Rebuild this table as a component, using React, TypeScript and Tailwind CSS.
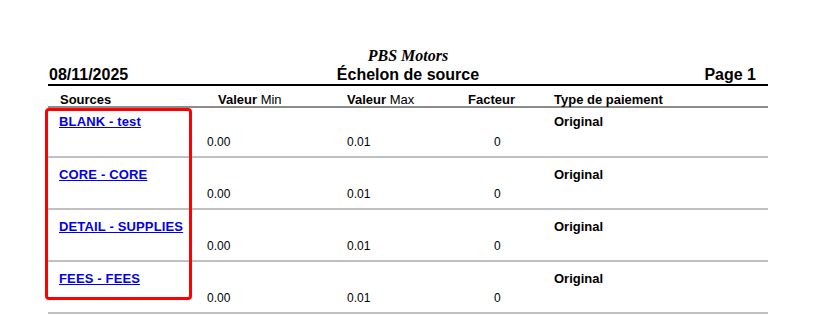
import React from 'react';

interface SourceRow {
    source: string;
    min: string;
    max: string;
    factor: string;
    payment: string;
}

const rows: SourceRow[] = [
    { source: 'BLANK - test', min: '0.00', max: '0.01', factor: '0', payment: 'Original' },
    { source: 'CORE - CORE', min: '0.00', max: '0.01', factor: '0', payment: 'Original' },
    { source: 'DETAIL - SUPPLIES', min: '0.00', max: '0.01', factor: '0', payment: 'Original' },
    { source: 'FEES - FEES', min: '0.00', max: '0.01', factor: '0', payment: 'Original' },
];

const cols = 'grid grid-cols-[152px_140px_120px_86px_1fr]';

export default function App() {
    return (
        <div className="relative w-[815px] h-[315px] bg-white text-black overflow-hidden font-['Liberation_Sans',Arial,sans-serif]">
            <div className="ml-[48px] w-[720px] pt-[47px]">
                <div className="text-center font-['Liberation_Serif','Times_New_Roman',serif] italic font-bold text-[16px] leading-[18px]">
                    PBS Motors
                </div>
                <div className="mt-[1px] flex items-center justify-between font-bold text-[16px] leading-[18px]">
                    <span className="pl-[1px] w-[140px]">08/11/2025</span>
                    <span>Échelon de source</span>
                    <span className="pr-[12px] w-[140px] text-right">Page 1</span>
                </div>
                <div className="h-[2px] bg-black" />

                {/* column headings */}
                <div className={`${cols} h-[22px] items-end border-b-2 border-[#8c8c8c] text-[13px] leading-[12px] font-bold`}>
                    <span className="pl-[12px]">Sources</span>
                    <span className="pl-[18px]">
                        Valeur <span className="font-normal">Min</span>
                    </span>
                    <span className="pl-[7px]">
                        Valeur <span className="font-normal">Max</span>
                    </span>
                    <span className="pl-[8px]">Facteur</span>
                    <span className="pl-[8px]">Type de paiement</span>
                </div>

                {rows.map((row, index) => {
                    const valuePad = index === 0 ? 'pt-[20px]' : 'pt-[19px]';
                    return (
                        <div
                            key={row.source}
                            className={`${cols} border-b-2 border-[#c0c0c0] ${index === 0 ? 'h-[50px] pt-[6px]' : 'h-[52px] pt-[9px]'}`}
                        >
                            <div className="pl-[11px] text-[13px] leading-[16px]">
                                <a href="#" className="font-bold text-[#0000ee] underline tracking-[0.15px]">
                                    {row.source}
                                </a>
                            </div>
                            <div className={`pl-[7px] ${valuePad} text-[12px] leading-[16px]`}>{row.min}</div>
                            <div className={`pl-[7px] ${valuePad} text-[12px] leading-[16px]`}>{row.max}</div>
                            <div className={`pl-[34px] ${valuePad} text-[12px] leading-[16px]`}>{row.factor}</div>
                            <div className="pl-[8px] text-[13px] leading-[16px] font-bold">{row.payment}</div>
                        </div>
                    );
                })}
            </div>

            {/* highlight box */}
            <div className="absolute left-[45px] top-[108px] w-[147px] h-[192px] border-[3px] border-[#ff0000] rounded-[4px]" />
        </div>
    );
}
